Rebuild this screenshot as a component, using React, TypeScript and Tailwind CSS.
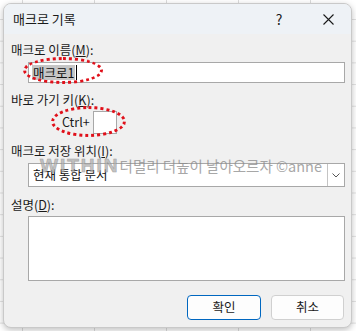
import React from 'react';

const FONT = "font-['Noto_Sans_CJK_KR','Noto_Sans',sans-serif]";

function Label({ text, hotkey }: { text: string; hotkey: string }) {
  return (
    <div className="h-4 text-[12.5px] leading-4 text-[#1a1a1a]">
      {text}(<span className="underline underline-offset-1">{hotkey}</span>):
    </div>
  );
}

export default function App() {
  return (
    <div
      className={`relative w-[356px] h-[331px] overflow-hidden bg-white ${FONT} bg-[linear-gradient(#e2e2e2_1px,transparent_1px),linear-gradient(90deg,#dcdcdc_1px,transparent_1px)] bg-[size:72px_21.7px] bg-[position:22px_19px] pt-[3px] pl-[3px]`}
    >
      <div className="w-[349px] h-[325px] rounded-[8px] border border-[#c9c9c9] bg-[#f0f0f0] shadow-[0_2px_6px_rgba(0,0,0,0.25)] overflow-hidden flex flex-col">
        {/* title bar */}
        <div className="h-[30px] shrink-0 bg-[#eef2f6] flex items-center pl-[9px] text-[13px] text-[#1a1a1a]">
          <span className="flex-1">매크로 기록</span>
          <span className="w-4 text-center text-[14px] mr-[36px]">?</span>
          <svg className="mr-[17px]" width="11" height="11" viewBox="0 0 11 11">
            <path d="M0.5 0.5 L10.5 10.5 M10.5 0.5 L0.5 10.5" stroke="#1a1a1a" strokeWidth="1.1" />
          </svg>
        </div>

        <div className="flex flex-col pl-[7px] pr-[6px] pt-[8px]">
          <Label text="매크로 이름" hotkey="M" />
          <div className="mt-1 ml-[17px] h-[21px] border border-[#a8a8a8] bg-white flex items-center pl-[3px]">
            <span className="bg-[#c6c6c6] text-[12.5px] leading-[15px] text-[#111] px-[1px]">매크로1</span>
            <span className="ml-[1px] w-px h-[15px] bg-black" />
          </div>

          <div className="mt-[9px]">
            <Label text="바로 가기 키" hotkey="K" />
          </div>
          <div className="mt-[3px] ml-[51px] flex items-center h-[23px]">
            <span className="text-[12.5px] text-[#1a1a1a]">Ctrl+</span>
            <div className="ml-[3px] w-[24px] h-[23px] border border-[#a8a8a8] bg-white" />
          </div>

          <div className="mt-[9px]">
            <Label text="매크로 저장 위치" hotkey="I" />
          </div>
          <div className="mt-1 ml-[17px] h-[24px] border border-[#a8a8a8] bg-white flex items-center">
            <span className="flex-1 pl-[4px] text-[12.5px] text-[#111]">현재 통합 문서</span>
            <div className="w-[17px] h-[22px] border-l border-[#c4c4c4] flex items-center justify-center">
              <svg width="8" height="5" viewBox="0 0 8 5">
                <path d="M0.5 0.5 L4 4 L7.5 0.5" fill="none" stroke="#444" strokeWidth="0.9" />
              </svg>
            </div>
          </div>

          <div className="mt-[10px]">
            <Label text="설명" hotkey="D" />
          </div>
          <div className="mt-[3px] ml-[17px] h-[65px] border border-[#a8a8a8] bg-white" />

          <div className="mt-[14px] flex justify-end gap-[10px] pr-[1px]">
            <button className="w-[74px] h-[25px] rounded-[4px] border border-[#0067c0] bg-[#fdfdfd] text-[12.5px] text-[#1a1a1a]">
              확인
            </button>
            <button className="w-[73px] h-[25px] rounded-[4px] border border-[#d0d0d0] bg-[#fdfdfd] text-[12.5px] text-[#1a1a1a]">
              취소
            </button>
          </div>
        </div>
      </div>

      {/* annotations */}
      <div className="absolute left-[23px] top-[57px] w-[80px] h-[27px] rounded-[50%] border-[3px] border-dotted border-[#e0101a]" />
      <div className="absolute left-[51px] top-[106px] w-[75px] h-[31px] rounded-[50%] border-[3px] border-dotted border-[#e0101a]" />

      {/* watermark */}
      <div className="absolute left-[40px] top-[152px] flex items-baseline text-[#8a8a8a] opacity-75 pointer-events-none">
        <span className="text-[19px] font-bold tracking-[2px] font-['Liberation_Sans',sans-serif] text-[#b0b0b0] [-webkit-text-stroke:0.6px_#8a8a8a]">WITHIN</span>
        <span className="text-[14.5px]">더멀리 더높이 날아오르자 ©anne</span>
      </div>
    </div>
  );
}
